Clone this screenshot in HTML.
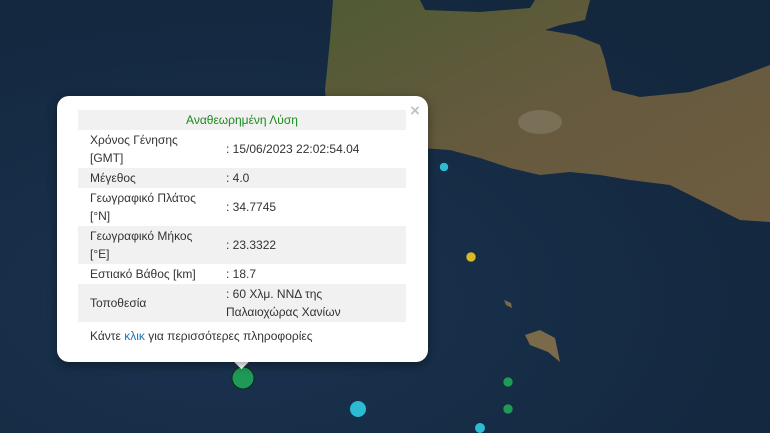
<!DOCTYPE html>
<html><head><meta charset="utf-8"><style>
html,body{margin:0;padding:0;width:770px;height:433px;overflow:hidden;background:#172f49;font-family:"Liberation Sans",sans-serif}
svg{position:absolute;left:0;top:0}
.pop{position:absolute;left:57px;top:96px;width:371px;height:266px;background:#fff;border-radius:12px;box-shadow:0 3px 10px rgba(0,0,0,.4)}
.tip{position:absolute;left:236px;top:356px;width:11px;height:11px;background:#fff;transform:rotate(45deg)}
.x{position:absolute;left:353px;top:5px;color:#c3c3c3;font-size:17px;font-weight:bold}
table{position:absolute;left:21px;top:14px;width:328px;border-collapse:collapse;font-size:12px;color:#333;line-height:18px}
td{padding:1px 0 1px 12px;vertical-align:middle}
td.v{padding-left:4px;width:180px}
tr.g{background:#f1f1f1}
.h{color:#1a8a1a;text-align:center;padding:1px 0}
.f{position:absolute;left:33px;top:233px;font-size:12px;color:#333}
.f span{color:#1a75b5}
</style></head><body>
<svg width="770" height="433" viewBox="0 0 770 433">
<defs>
<linearGradient id="l" x1="0" y1="0" x2="1" y2="1"><stop offset="0" stop-color="#4f5a34"/><stop offset=".5" stop-color="#665a3e"/><stop offset="1" stop-color="#6e5c40"/></linearGradient>
<radialGradient id="s" cx=".3" cy=".7" r=".8"><stop offset="0" stop-color="#1a3350"/><stop offset="1" stop-color="#13273d"/></radialGradient>
</defs>
<rect width="770" height="433" fill="url(#s)"/>
<path d="M333 0L420 0L425 10L480 12L530 8L535 0L590 0L585 20L560 25L545 30L575 35L600 45L605 60L612 90L640 97L690 92L730 80L770 65L770 222L740 220L720 210L700 200L670 185L630 180L600 175L570 172L540 175L510 168L480 158L450 150L420 148L330 150L325 90L330 40Z" fill="url(#l)"/>
<ellipse cx="540" cy="122" rx="22" ry="12" fill="#8d8470" opacity=".5"/>
<path d="M525 335L540 330L555 338L560 362L548 352L530 345Z" fill="#7a6a4a"/>
<path d="M504 300L511 303L512 308L506 305Z" fill="#7a6a4a"/>
<circle cx="444" cy="167" r="4.5" fill="#2bbcd4" stroke="#123" stroke-width=".5"/>
<circle cx="471" cy="257" r="5" fill="#d9b82a" stroke="#123" stroke-width=".5"/>
<circle cx="358" cy="409" r="8" fill="#2bbcd4"/>
<circle cx="508" cy="382" r="5" fill="#1e9a56" stroke="#123" stroke-width=".5"/>
<circle cx="508" cy="409" r="5" fill="#1e9a56" stroke="#123" stroke-width=".5"/>
<circle cx="480" cy="428" r="5" fill="#2bbcd4"/>
<circle cx="243" cy="378" r="11" fill="#1e9a56" stroke="#0d2a1c" stroke-width="1"/>
</svg>
<div class="tip"></div>
<div class="pop">
<div class="x">×</div>
<table>
<tr class="g"><td colspan="2" class="h">Αναθεωρημένη Λύση</td></tr>
<tr><td>Χρόνος Γένησης<br>[GMT]</td><td class="v">: 15/06/2023 22:02:54.04</td></tr>
<tr class="g"><td>Μέγεθος</td><td class="v">: 4.0</td></tr>
<tr><td>Γεωγραφικό Πλάτος<br>[°N]</td><td class="v">: 34.7745</td></tr>
<tr class="g"><td>Γεωγραφικό Μήκος<br>[°E]</td><td class="v">: 23.3322</td></tr>
<tr><td>Εστιακό Βάθος [km]</td><td class="v">: 18.7</td></tr>
<tr class="g"><td>Τοποθεσία</td><td class="v">: 60 Χλμ. ΝΝΔ της<br>Παλαιοχώρας Χανίων</td></tr>
</table>
<div class="f">Κάντε <span>κλικ</span> για περισσότερες πληροφορίες</div>
</div>
</body></html>
